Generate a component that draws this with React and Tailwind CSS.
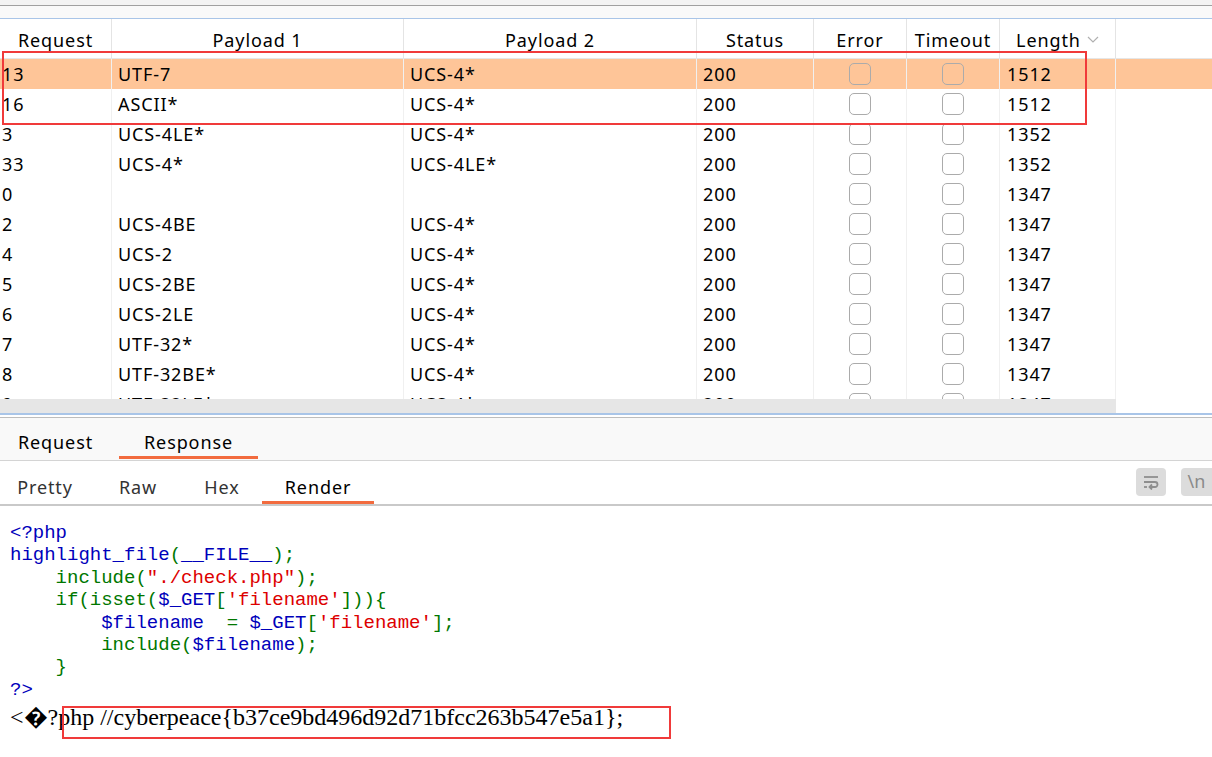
import React from "react";

const rows = [
  ["13", "UTF-7", "UCS-4*", "200", "1512", true],
  ["16", "ASCII*", "UCS-4*", "200", "1512"],
  ["3", "UCS-4LE*", "UCS-4*", "200", "1352"],
  ["33", "UCS-4*", "UCS-4LE*", "200", "1352"],
  ["0", "", "", "200", "1347"],
  ["2", "UCS-4BE", "UCS-4*", "200", "1347"],
  ["4", "UCS-2", "UCS-4*", "200", "1347"],
  ["5", "UCS-2BE", "UCS-4*", "200", "1347"],
  ["6", "UCS-2LE", "UCS-4*", "200", "1347"],
  ["7", "UTF-32*", "UCS-4*", "200", "1347"],
  ["8", "UTF-32BE*", "UCS-4*", "200", "1347"],
  ["9", "UTF-32LE*", "UCS-4*", "200", "1347"],
];

const cols = "grid grid-cols-[112px_292px_293px_117px_93px_93px_116px_1fr]";

const Check = () => (
  <div className="w-[22px] h-[22px] rounded-[5px] border-[1.5px] border-[#ababab]" />
);

const B = ({ children }) => <span className="text-[#0000bb]">{children}</span>;
const G = ({ children }) => <span className="text-[#007700]">{children}</span>;
const R = ({ children }) => <span className="text-[#dd0000]">{children}</span>;

export default function App() {
  return (
    <div className="relative w-[1212px] h-[757px] overflow-hidden bg-white text-black font-['Noto_Sans',sans-serif] text-[18px] tracking-[0.05em]">
      {/* top strip */}
      <div className="h-[6px] bg-[#f3f3f3] border-b border-[#a0a0a0]" />
      <div className="h-[13px] bg-[#f9f9f9] border-b border-[#a9c5e8]" />

      {/* header */}
      <div className={`${cols} h-[40px] border-b border-[#e6e6e6]`}>
        {["Request", "Payload 1", "Payload 2", "Status", "Error", "Timeout"].map((h) => (
          <div key={h} className="flex items-center justify-center pt-[2px] border-r border-[#e4e4e4] leading-none">
            {h}
          </div>
        ))}
        <div className="flex items-center justify-center gap-[6px] pt-[2px] border-r border-[#e4e4e4] leading-none">
          Length
          <svg width="12" height="8" viewBox="0 0 12 8" className="mt-[1px]">
            <polyline points="1,1 6,6 11,1" fill="none" stroke="#b0b0b0" strokeWidth="1.2" />
          </svg>
        </div>
        <div />
      </div>

      {/* body */}
      <div className="h-[340px] overflow-hidden">
        {rows.map(([req, p1, p2, st, len, sel]) => (
          <div key={req} className={`${cols} h-[30px] leading-none ${sel ? "bg-[#fec598]" : ""}`}>
            <div className="flex items-center pl-[2px] border-r border-[#f0f0f0]">{req}</div>
            <div className="flex items-center pl-[6px] border-r border-[#f0f0f0]">{p1}</div>
            <div className="flex items-center pl-[6px] border-r border-[#f0f0f0]">{p2}</div>
            <div className="flex items-center pl-[6px] border-r border-[#f0f0f0]">{st}</div>
            <div className="flex items-center justify-center border-r border-[#f0f0f0]"><Check /></div>
            <div className="flex items-center justify-center border-r border-[#f0f0f0]"><Check /></div>
            <div className="flex items-center pl-[7px] border-r border-[#f0f0f0]">{len}</div>
            <div />
          </div>
        ))}
      </div>

      {/* horizontal scrollbar */}
      <div className="flex h-[14px]">
        <div className="w-[1116px] bg-[#e6e6e6]" />
        <div className="flex-1 bg-white" />
      </div>
      <div className="h-[2px] bg-[#a9c5e8]" />
      <div className="h-[3px] bg-white border-b border-[#bdbdbd]" />

      {/* Request / Response tabs */}
      <div className="flex items-stretch gap-[8px] h-[43px] bg-[#f9f9f9] border-b border-[#d4d4d4]">
        <div className="w-[111px] flex items-center justify-center pt-[6px]">Request</div>
        <div className="relative w-[139px] flex items-center justify-center pt-[6px]">
          Response
          <div className="absolute left-0 right-0 bottom-[1px] h-[3px] bg-[#f26b3e]" />
        </div>
      </div>

      {/* Pretty / Raw / Hex / Render */}
      <div className="flex items-stretch h-[45px] border-b-2 border-[#c9c9c9]">
        <div className="w-[90px] flex items-center justify-center text-[#333] pt-[10px]">Pretty</div>
        <div className="w-[96px] flex items-center justify-center text-[#333] pt-[10px]">Raw</div>
        <div className="w-[72px] flex items-center justify-center text-[#333] pt-[10px]">Hex</div>
        <div className="relative ml-[4px] w-[112px] flex items-center justify-center pt-[10px]">
          Render
          <div className="absolute left-0 right-0 bottom-0 h-[3px] bg-[#f26b3e]" />
        </div>
        <div className="flex-1" />
        <div className="flex items-center gap-[15px] pb-[2px]">
          <div className="w-[30px] h-[28px] rounded-[4px] bg-[#dcdcdc] flex items-center justify-center">
            <svg width="18" height="16" viewBox="0 0 18 16" fill="none" stroke="#8e8e8e" strokeWidth="1.8">
              <path d="M2 3h14" />
              <path d="M2 8h11a2.5 2.5 0 0 1 0 5H8" />
              <path d="M10 10.5L7.5 13L10 15.5" />
              <path d="M2 13h3" />
            </svg>
          </div>
          <div className="w-[31px] h-[28px] rounded-l-[4px] bg-[#dcdcdc] flex items-center justify-center text-[#8a8a8a] tracking-normal">
            \n
          </div>
        </div>
      </div>

      {/* rendered response */}
      <div className="pl-[10px] pt-[16px] font-['Liberation_Mono',monospace] text-[19px] leading-[22.4px] tracking-normal whitespace-pre">
        <div><B>&lt;?php</B></div>
        <div><B>highlight_file</B><G>(</G><B>__FILE__</B><G>);</G></div>
        <div><G>{"    include("}</G><R>"./check.php"</R><G>);</G></div>
        <div><G>{"    if(isset("}</G><B>$_GET</B><G>[</G><R>'filename'</R><G>{"])){"}</G></div>
        <div><B>{"        $filename"}</B><G>{"  = "}</G><B>$_GET</B><G>[</G><R>'filename'</R><G>];</G></div>
        <div><G>{"        include("}</G><B>$filename</B><G>);</G></div>
        <div><G>{"    }"}</G></div>
        <div><B>?&gt;</B></div>
      </div>
      <div className="pl-[10px] mt-[2px] font-['Liberation_Serif',serif] text-[24px] leading-[28px] tracking-normal whitespace-pre">
        &lt;{"\uFFFD"}?php //cyberpeace{"{"}b37ce9bd496d92d71bfcc263b547e5a1{"}"};
      </div>

      {/* annotation boxes */}
      <div className="absolute left-[2px] top-[51px] w-[1085px] h-[74px] border-2 border-[#f03a3a]" />
      <div className="absolute left-[62px] top-[706px] w-[609px] h-[33px] border-2 border-[#f03a3a]" />
    </div>
  );
}
